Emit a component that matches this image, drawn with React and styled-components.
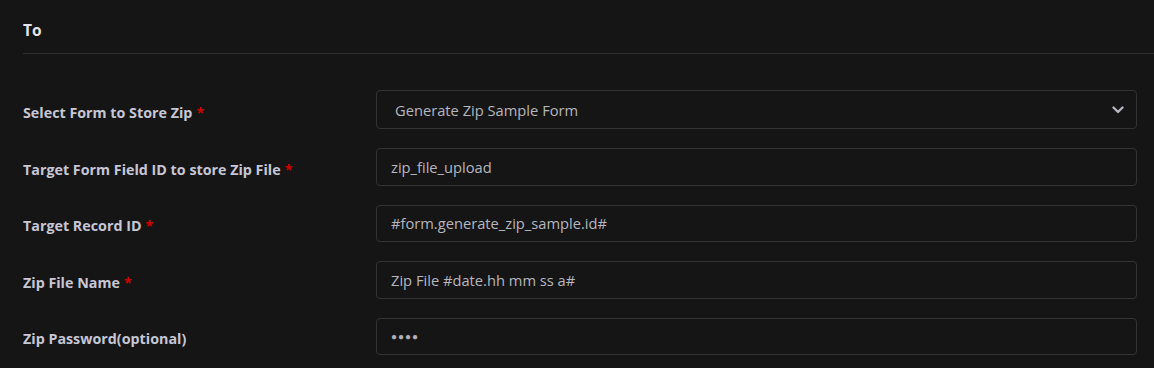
import React from 'react'
import styled, { createGlobalStyle } from 'styled-components'

const GlobalStyle = createGlobalStyle`
  html, body {
    margin: 0;
    padding: 0;
    background: #151515;
  }
  body {
    font-family: "Open Sans", "Noto Sans", "Liberation Sans", sans-serif;
  }
`

const Panel = styled.div`
  width: 1154px;
  height: 368px;
  background: #151515;
  padding-left: 23px;
  box-sizing: border-box;
  overflow: hidden;
`

const Header = styled.div`
  height: 54px;
  display: flex;
  align-items: flex-start;
  padding-top: 19px;
  border-bottom: 1px solid #2f2f31;
  box-sizing: border-box;
`

const Title = styled.h3`
  margin: 0;
  font-size: 15.5px;
  line-height: 22px;
  font-weight: 700;
  color: #e4e4ea;
`

const Form = styled.div`
  display: flex;
  flex-direction: column;
  gap: 19px;
  padding: 36px 17px 0 0;
`

const Row = styled.div`
  display: grid;
  grid-template-columns: 353px 1fr;
  align-items: center;
`

const Label = styled.label`
  padding-top: 5px;
  font-size: 14.3px;
  font-weight: 700;
  color: #c6c6d4;
`

const Required = styled.span`
  color: #d40000;
  margin-left: 4px;
`

const Field = styled.div`
  position: relative;
  height: ${p => (p.$select ? '39px' : '37.5px')};
  border: 1px solid #333335;
  border-radius: 4px;
  box-sizing: border-box;
  display: flex;
  align-items: center;
  padding-left: ${p => (p.$select ? '18px' : '14px')};
  font-size: 14.7px;
  color: #b6b6be;
`

const Dots = styled.span`
  font-size: 10px;
  letter-spacing: 1px;
  color: #b0b0b8;
`

const Chevron = styled.svg`
  position: absolute;
  right: 12px;
  top: 50%;
  transform: translateY(-50%);
`

const rows = [
  { label: 'Select Form to Store Zip', required: true, value: 'Generate Zip Sample Form', select: true },
  { label: 'Target Form Field ID to store Zip File', required: true, value: 'zip_file_upload' },
  { label: 'Target Record ID', required: true, value: '#form.generate_zip_sample.id#' },
  { label: 'Zip File Name', required: true, value: 'Zip File #date.hh mm ss a#' },
  { label: 'Zip Password(optional)', password: true },
]

export default function App() {
  return (
    <>
      <GlobalStyle />
      <Panel>
        <Header>
          <Title>To</Title>
        </Header>
        <Form>
          {rows.map(r => (
            <Row key={r.label}>
              <Label>
                {r.label}
                {r.required && <Required>*</Required>}
              </Label>
              <Field $select={r.select}>
                {r.password ? <Dots>●●●●</Dots> : r.value}
                {r.select && (
                  <Chevron width="12" height="8" viewBox="0 0 12 8">
                    <path d="M1.5 1.5 L6 6 L10.5 1.5" fill="none" stroke="#b4b4c0" strokeWidth="2.4" strokeLinecap="round" strokeLinejoin="round" />
                  </Chevron>
                )}
              </Field>
            </Row>
          ))}
        </Form>
      </Panel>
    </>
  )
}
